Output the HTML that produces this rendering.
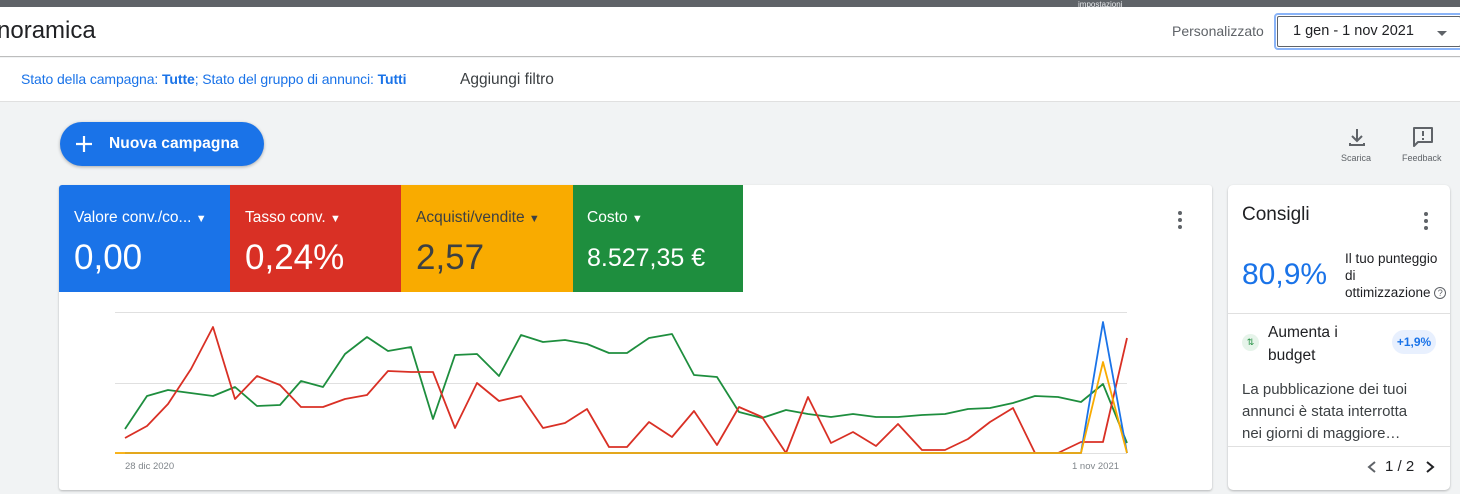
<!DOCTYPE html>
<html><head><meta charset="utf-8"><style>
*{margin:0;padding:0;box-sizing:border-box}
body{width:1460px;height:494px;overflow:hidden;background:#f1f3f4;font-family:"Liberation Sans",Arial,sans-serif;position:relative;color:#202124}
.abs{position:absolute}
</style></head><body>
<div class="abs" style="left:0;top:0;width:1460px;height:7px;background:#5f6368"></div>
<div class="abs" style="left:1078px;top:0;font-size:8px;color:#e8eaed;line-height:9px">impostazioni</div>
<div class="abs" style="left:0;top:7px;width:1460px;height:50px;background:#fff;border-bottom:1px solid #bdbdbd"></div>
<div class="abs" style="left:-3px;top:17px;font-size:24px;color:#202124">noramica</div>
<div class="abs" style="left:1172px;top:23px;font-size:14px;color:#5f6368">Personalizzato</div>
<div class="abs" style="left:1274px;top:13px;width:190px;height:37px;border:2px solid #8ab4f8;border-radius:4px;background:#fff"><div style="position:absolute;inset:1px;border:1px solid #5f6368;border-radius:2px"></div></div>
<div class="abs" style="left:1293px;top:23px;font-size:14.5px;color:#202124">1 gen - 1 nov 2021</div>
<div class="abs" style="left:1437px;top:31px;width:0;height:0;border-left:5px solid transparent;border-right:5px solid transparent;border-top:5px solid #5f6368"></div>
<div class="abs" style="left:0;top:58px;width:1460px;height:44px;background:#fff;border-bottom:1px solid #e0e0e0"></div>
<div class="abs" style="left:21px;top:71px;font-size:14px;color:#1a73e8;letter-spacing:-0.1px;white-space:nowrap">Stato della campagna: <b>Tutte</b>; Stato del gruppo di annunci: <b>Tutti</b></div>
<div class="abs" style="left:460px;top:71px;font-size:15.5px;color:#3c4043">Aggiungi filtro</div>
<div class="abs" style="left:60px;top:122px;width:204px;height:44px;background:#1a73e8;border-radius:22px;box-shadow:0 1px 3px rgba(0,0,0,.3)"></div>
<svg class="abs" style="left:74px;top:134px" width="20" height="20"><path d="M10 2v16M2 10h16" stroke="#fff" stroke-width="2.2"/></svg>
<div class="abs" style="left:109px;top:135px;font-size:15.5px;color:#fff;font-weight:bold;letter-spacing:.1px">Nuova campagna</div>
<svg class="abs" style="left:1346px;top:126px" width="22" height="22"><path d="M11 3v11M6 10l5 5 5-5M4 17v2h14v-2" stroke="#5f6368" stroke-width="2" fill="none"/></svg>
<div class="abs" style="left:1341px;top:153px;font-size:9px;color:#5f6368">Scarica</div>
<svg class="abs" style="left:1411px;top:125px" width="24" height="24"><path d="M3 3h18v14H7l-4 4z" stroke="#5f6368" stroke-width="2" fill="none" stroke-linejoin="round"/><path d="M12 6v5M12 13v2" stroke="#5f6368" stroke-width="2"/></svg>
<div class="abs" style="left:1402px;top:153px;font-size:9px;color:#5f6368">Feedback</div>

<div class="abs" style="left:59px;top:185px;width:1153px;height:305px;background:#fff;border-radius:3px;box-shadow:0 1px 2px rgba(0,0,0,.25)"></div>
<div class="abs" style="left:59px;top:185px;width:171px;height:107px;background:#1a73e8;border-top-left-radius:3px"></div>
<div class="abs" style="left:230px;top:185px;width:171px;height:107px;background:#d93025"></div>
<div class="abs" style="left:401px;top:185px;width:172px;height:107px;background:#f9ab00"></div>
<div class="abs" style="left:573px;top:185px;width:170px;height:107px;background:#1e8e3e"></div>
<div class="abs" style="left:74px;top:209px;font-size:15.5px;color:#fff;white-space:nowrap">Valore conv./co... <span style="font-size:11px">▼</span></div>
<div class="abs" style="left:74px;top:238px;font-size:35px;color:#fff">0,00</div>
<div class="abs" style="left:245px;top:209px;font-size:15.5px;color:#fff">Tasso conv. <span style="font-size:11px">▼</span></div>
<div class="abs" style="left:245px;top:238px;font-size:35px;color:#fff">0,24%</div>
<div class="abs" style="left:416px;top:209px;font-size:15.5px;color:#3c4043;white-space:nowrap">Acquisti/vendite <span style="font-size:11px">▼</span></div>
<div class="abs" style="left:416px;top:238px;font-size:35px;color:#3c4043">2,57</div>
<div class="abs" style="left:587px;top:209px;font-size:15.5px;color:#fff">Costo <span style="font-size:11px">▼</span></div>
<div class="abs" style="left:587px;top:244px;font-size:25px;color:#fff">8.527,35 €</div>
<svg class="abs" style="left:1176px;top:210px" width="8" height="22"><circle cx="4" cy="3" r="2" fill="#5f6368"/><circle cx="4" cy="10" r="2" fill="#5f6368"/><circle cx="4" cy="17" r="2" fill="#5f6368"/></svg>

<svg class="abs" style="left:0;top:0" width="1212" height="494">
<g stroke="#e0e0e0" stroke-width="1"><path d="M115 312.5H1127M115 383.5H1127M115 453.5H1127"/></g>
<g fill="none" stroke-width="1.8" stroke-linejoin="round">
<polyline stroke="#1e8e3e" points="125,429 147,396 168,390 213,396 235,387 257,406 280,405 301,381 323,387 345,354 367,337 388,351 411,347 433,419 455,355 477,354 499,376 521,335 543,342 565,340 587,344 609,353 627,353 649,338 672,334 694,375 717,377 739,412 762,418 786,410 808,414 831,417 853,414 876,417 898,417 922,415 945,414 968,409 990,408 1013,403 1035,396 1058,397 1081,402 1103,384 1127,443"/>
<polyline stroke="#d93025" points="125,438 147,426 168,404 191,369 213,327 235,399 257,376 280,385 301,407 323,407 345,399 367,395 388,371 411,372 433,372 455,428 477,383 499,401 521,396 543,428 565,423 587,409 609,447 627,447 649,422 672,437 694,411 717,445 739,407 762,417 786,453 808,397 831,443 853,432 876,446 898,424 922,450 945,450 968,439 990,422 1013,408 1035,453 1058,453 1081,442 1103,442 1127,338"/>
<polyline stroke="#1a73e8" points="125,453 1081,453 1103,322 1127,453"/>
<polyline stroke="#f9ab00" points="115,453 1081,453 1103,362 1127,453"/>
</g>
<text x="125" y="469" font-size="9.5" fill="#80868b" font-family="Liberation Sans">28 dic 2020</text>
<text x="1072" y="469" font-size="9.5" fill="#80868b" font-family="Liberation Sans">1 nov 2021</text>
</svg>

<div class="abs" style="left:1228px;top:185px;width:222px;height:305px;background:#fff;border-radius:5px;box-shadow:0 1px 2px rgba(0,0,0,.25)"></div>
<div class="abs" style="left:1242px;top:204px;font-size:19px;color:#202124">Consigli</div>
<svg class="abs" style="left:1422px;top:211px" width="8" height="22"><circle cx="4" cy="3" r="2" fill="#5f6368"/><circle cx="4" cy="10" r="2" fill="#5f6368"/><circle cx="4" cy="17" r="2" fill="#5f6368"/></svg>
<div class="abs" style="left:1242px;top:258px;font-size:30px;color:#1a73e8">80,9%</div>
<div class="abs" style="left:1345px;top:250px;font-size:13.5px;line-height:17px;color:#202124;white-space:nowrap">Il tuo punteggio<br>di<br>ottimizzazione <span style="display:inline-block;width:12px;height:12px;border:1px solid #5f6368;border-radius:50%;font-size:9px;line-height:10px;text-align:center;color:#5f6368;vertical-align:middle">?</span></div>
<div class="abs" style="left:1228px;top:313px;width:222px;height:1px;background:#e0e0e0"></div>
<div class="abs" style="left:1242px;top:334px;width:17px;height:17px;border-radius:50%;background:#e6f4ea;font-size:9px;color:#1e8e3e;text-align:center;line-height:17px">⇅</div>
<div class="abs" style="left:1268px;top:321px;font-size:15.5px;line-height:23px;color:#202124">Aumenta i<br>budget</div>
<div class="abs" style="left:1392px;top:330px;width:44px;height:24px;border-radius:12px;background:#e8f0fe;font-size:12px;font-weight:bold;color:#1a73e8;text-align:center;line-height:24px">+1,9%</div>
<div class="abs" style="left:1242px;top:379px;font-size:15px;line-height:22px;color:#3c4043;white-space:nowrap">La pubblicazione dei tuoi<br>annunci è stata interrotta<br>nei giorni di maggiore…</div>
<div class="abs" style="left:1228px;top:446px;width:222px;height:1px;background:#e0e0e0"></div>
<svg class="abs" style="left:1366px;top:460px" width="12" height="14"><path d="M9 2L3 7l6 5" stroke="#5f6368" stroke-width="2" fill="none"/></svg>
<div class="abs" style="left:1385px;top:458px;font-size:15px;color:#202124">1 / 2</div>
<svg class="abs" style="left:1424px;top:460px" width="12" height="14"><path d="M3 2l6 5-6 5" stroke="#202124" stroke-width="2" fill="none"/></svg>
</body></html>
